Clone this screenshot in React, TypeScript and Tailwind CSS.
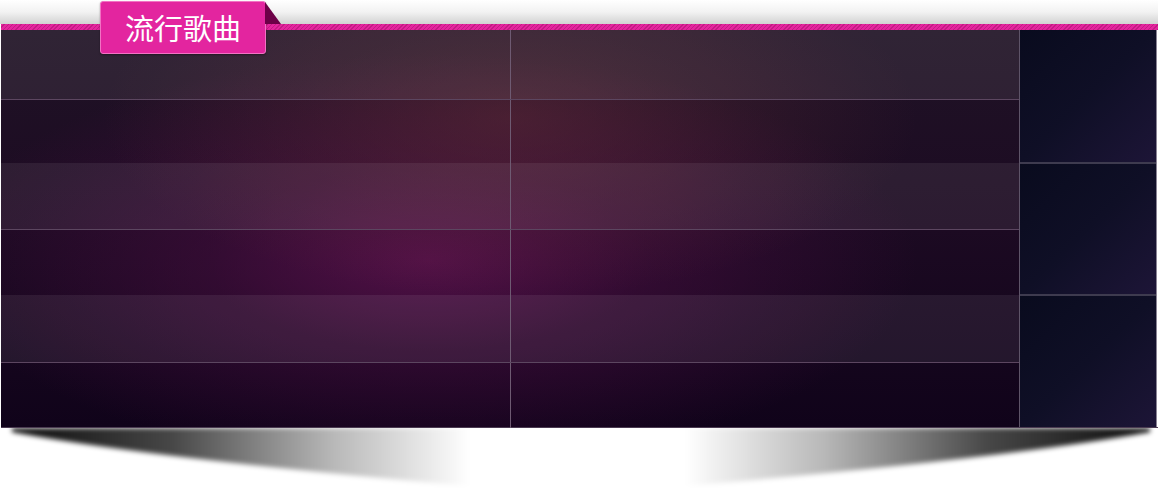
import type { ReactNode } from 'react';

type Row = { h: string; light: boolean; line: boolean };

const ROWS: Row[] = [
  { h: 'h-[69px]', light: true, line: true },
  { h: 'h-[63px]', light: false, line: false },
  { h: 'h-[66px]', light: true, line: true },
  { h: 'h-[65px]', light: false, line: false },
  { h: 'h-[67px]', light: true, line: true },
  { h: 'h-[65px]', light: false, line: false },
];

function GridRow({ row }: { row: Row }) {
  return (
    <div className={`${row.line ? 'border-b border-[#5c4660]' : ''} ${row.light ? 'bg-white/[0.07]' : ''} flex`}>
      <div className={`${row.h} w-[510px] border-r border-[#6e5a72]`} />
      <div className={`${row.h} w-[508px]`} />
    </div>
  );
}

function SideCell({ size, last = false }: { size: string; last?: boolean; children?: ReactNode }) {
  return (
    <div
      className={`${size} bg-gradient-to-br from-[#090b1e] via-[#0f0f26] to-[#1d1537] ${
        last ? '' : 'border-b-2 border-[#3e3b4f]'
      }`}
    />
  );
}

function Shadows() {
  return (
    <svg className="absolute left-0 top-[428px]" width="1158" height="61" viewBox="0 0 1158 61">
      <defs>
        <linearGradient id="shL" x1="0" y1="0" x2="1" y2="0">
          <stop offset="0" stopColor="#000" stopOpacity="0.95" />
          <stop offset="0.35" stopColor="#000" stopOpacity="0.72" />
          <stop offset="0.7" stopColor="#000" stopOpacity="0.28" />
          <stop offset="1" stopColor="#000" stopOpacity="0" />
        </linearGradient>
        <linearGradient id="shR" x1="1" y1="0" x2="0" y2="0">
          <stop offset="0" stopColor="#000" stopOpacity="0.95" />
          <stop offset="0.35" stopColor="#000" stopOpacity="0.72" />
          <stop offset="0.7" stopColor="#000" stopOpacity="0.28" />
          <stop offset="1" stopColor="#000" stopOpacity="0" />
        </linearGradient>
        <filter id="blur" x="-10%" y="-50%" width="120%" height="200%">
          <feGaussianBlur stdDeviation="2.5" />
        </filter>
      </defs>
      <path d="M12,0 L470,0 L470,58 Q150,30 12,4 Z" fill="url(#shL)" filter="url(#blur)" />
      <path d="M1150,0 L685,0 L685,58 Q1008,30 1150,4 Z" fill="url(#shR)" filter="url(#blur)" />
    </svg>
  );
}

export default function App() {
  return (
    <div className="relative h-[489px] w-[1158px] overflow-hidden bg-white">
      <div className="h-[24px] bg-gradient-to-b from-white via-[#f2f2f2] to-[#d2d2d2]" />
      <div className="ml-[1px] h-[6px] w-[1157px] bg-[repeating-linear-gradient(135deg,#e4259e_0px,#e4259e_2px,#c41b84_2px,#c41b84_3px)]" />

      <Shadows />

      <div className="relative ml-[1px] flex h-[398px] w-[1157px] border-b border-[#4b3b52]">
        <div className="w-[1019px] border-r border-[#5e5468] bg-[radial-gradient(ellipse_48%_52%_at_42%_58%,rgba(95,18,80,0.8)_0%,rgba(80,15,70,0.45)_45%,rgba(80,15,70,0)_100%),linear-gradient(180deg,#201326_0%,#1c0a22_50%,#10031a_100%)]">
          <div className="bg-[radial-gradient(ellipse_40%_45%_at_50%_22%,rgba(120,55,60,0.4)_0%,rgba(120,55,60,0)_100%)]">
            {ROWS.map((row, i) => (
              <GridRow key={i} row={row} />
            ))}
          </div>
        </div>
        <div className="flex w-[137px] flex-col border-r border-[#8a8494]">
          <SideCell size="h-[134px]" />
          <SideCell size="h-[132px]" />
          <SideCell size="flex-1" last />
        </div>
      </div>

      <div className="absolute left-[100px] top-[1px] flex h-[53px] w-[166px] items-center justify-center rounded-[3px] border border-[#f272c4] bg-[#e3259f] shadow-[0_1px_2px_rgba(0,0,0,0.35)]">
        <span className="text-[29px] leading-none text-white [font-family:'Noto_Sans_CJK_SC','Noto_Sans',sans-serif]">
          流行歌曲
        </span>
      </div>
      <svg className="absolute left-[265px] top-[2px]" width="16" height="22" viewBox="0 0 16 22">
        <polygon points="0,0 16,22 0,22" fill="#6c0047" />
      </svg>
    </div>
  );
}
